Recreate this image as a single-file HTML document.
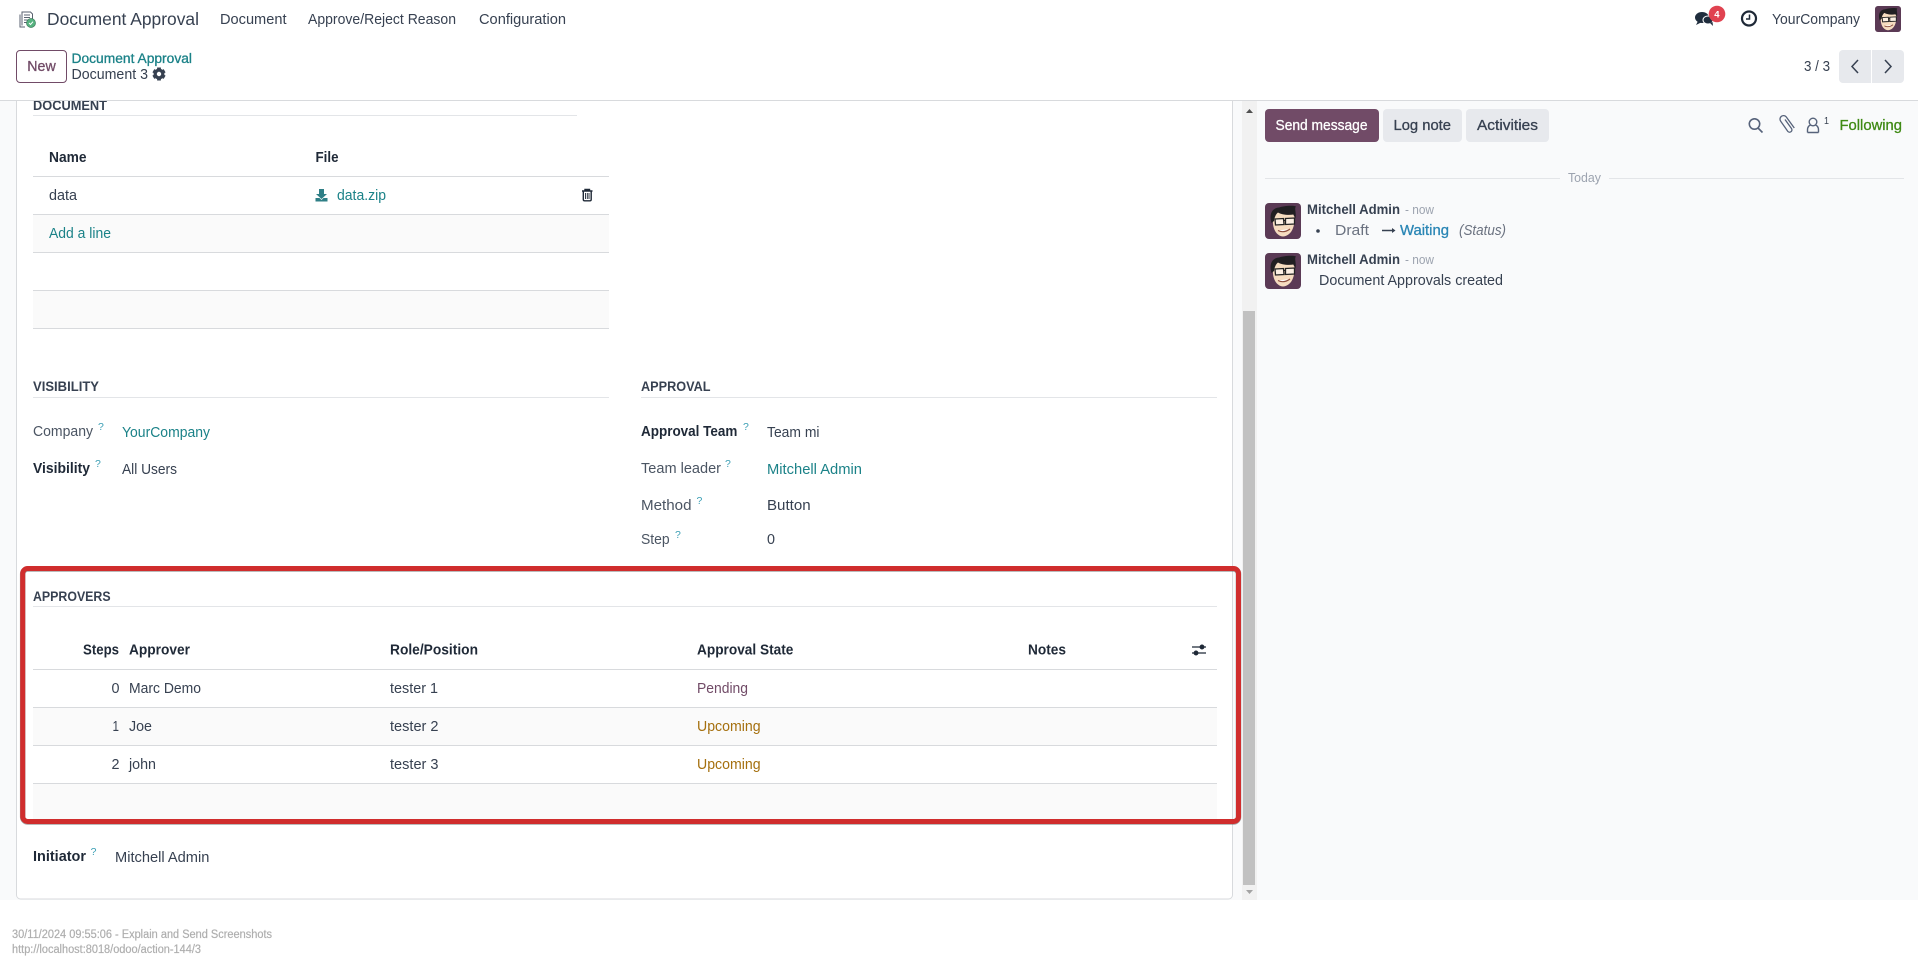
<!DOCTYPE html>
<html lang="en"><head><meta charset="utf-8"><title>Document Approval</title>
<style>
html,body{margin:0;padding:0;background:#fff;width:1918px;height:967px;overflow:hidden}
svg{display:block}
text{font-family:"Liberation Sans",Arial,sans-serif;font-size:14.5px;fill:#374151;white-space:pre}
.b{font-weight:700}
.h{font-weight:700;fill:#1f2937}
.sec{font-weight:700;font-size:13.5px;fill:#374151}
.lbl{fill:#4b5563}
.t{fill:#1b8288}
.q{font-size:10.5px;fill:#3b9fb5}
.g{fill:#9ca3af}
</style></head><body>
<svg xmlns="http://www.w3.org/2000/svg" width="1918" height="967" viewBox="0 0 1918 967">
<defs>
<symbol id="av" viewBox="0 0 36 36">
<rect width="36" height="36" rx="4" fill="#5b3a55"/>
<path d="M8 15C7 25 11 33 18 33.500C25 33 30 26 29.500 14L27 9H11z" fill="#f6dcc0"/>
<path d="M6.500 20C3.500 10 8 5 14 4.500C19 3 27 2 31 3.500C29 5.500 31.500 9 30.500 15.500L28.500 11.500C23 12.500 16 11.500 13 9.500C11 11 9.500 14 9 18z" fill="#211f22"/>
<path d="M10 16l8.500-.5.500 6-8.500.5zM20.500 15.500l9-.5v6l-9 .5z" fill="#fff" fill-opacity=".55" stroke="#222" stroke-width="1.300"/>
<path d="M19 17.500h1.500" stroke="#222" stroke-width="1.100"/>
<path d="M13 27.500Q19 30.500 25 26" stroke="#8a4b3a" stroke-width="1.200" fill="#fff"/>
</symbol>
</defs>

<!-- backgrounds -->
<rect x="0" y="101" width="1918" height="799" fill="#f9fafb"/>
<rect x="16.500" y="80" width="1216" height="819" rx="4" fill="#fff" stroke="#d8dadd"/>
<rect x="0" y="0" width="1918" height="100" fill="#fff"/>
<rect x="0" y="100" width="1918" height="1" fill="#d8dadd"/>
<!-- scrollbar -->
<rect x="1242" y="101" width="15" height="799" fill="#f1f1f1"/>
<rect x="1243" y="311" width="12" height="574" fill="#c1c1c1"/>
<path d="M1246 113l3.500-4 3.500 4z" fill="#505050"/>
<path d="M1246 890l3.500 4 3.500-4z" fill="#a3a3a3"/>

<!-- navbar logo -->
<g transform="translate(18,11)" fill="none" stroke="#5a6270" stroke-width="1">
<path d="M2 3.500v12.500h5"/>
<path d="M4 14.500V1h8.500l2 2v5"/>
<path d="M6 4h6M6 6.500h6M6 9h3.500M6 11.500h2.500" stroke-width="1"/>
<circle cx="13" cy="12" r="4.500" fill="#56b27f" stroke="#3f7e5e" stroke-width=".7"/>
<path d="M11 12l1.500 1.500 2.500-2.800" stroke="#fff" stroke-width="1"/>
</g>
<text x="47" y="25" style="font-size:17.5px" textLength="152" lengthAdjust="spacingAndGlyphs">Document Approval</text>
<text x="220" y="24" textLength="66.500" lengthAdjust="spacingAndGlyphs">Document</text>
<text x="308" y="24" textLength="148" lengthAdjust="spacingAndGlyphs">Approve/Reject Reason</text>
<text x="479" y="24" textLength="87" lengthAdjust="spacingAndGlyphs">Configuration</text>

<!-- chat icon -->
<ellipse cx="1702" cy="17.500" rx="7" ry="5.500" fill="#1f2d3d"/>
<path d="M1698 21l-2 4 5-2.500z" fill="#1f2d3d"/>
<ellipse cx="1708" cy="20" rx="5" ry="4" fill="#1f2d3d" stroke="#fff"/>
<path d="M1710 23l3 3-.5-4z" fill="#1f2d3d"/>
<circle cx="1717" cy="14" r="8.300" fill="#e04250"/>
<text x="1714.300" y="17.700" style="font-size:9.500px;fill:#fff;font-weight:700">4</text>
<!-- clock -->
<circle cx="1749" cy="18.500" r="7" fill="none" stroke="#1f2937" stroke-width="2.200"/>
<path d="M1749.500 14.500v4.500h-3.500" fill="none" stroke="#1f2937" stroke-width="1.500"/>
<text x="1772" y="24" textLength="88" lengthAdjust="spacingAndGlyphs">YourCompany</text>
<use href="#av" x="1875" y="6" width="26" height="26"/>

<!-- control panel -->
<rect x="16.500" y="50.500" width="50" height="32" rx="3.500" fill="#fff" stroke="#714b67"/>
<text x="27.300" y="71" textLength="28.400" lengthAdjust="spacingAndGlyphs" style="fill:#714b67;stroke:#714b67;stroke-width:.3">New</text>
<text x="71.500" y="63" textLength="120.500" lengthAdjust="spacingAndGlyphs" style="font-size:13.500px;fill:#1b8288;stroke:#1b8288;stroke-width:.3">Document Approval</text>
<text x="71.500" y="79" textLength="76.500" lengthAdjust="spacingAndGlyphs">Document 3</text>
<g transform="translate(159,74)" fill="#374151">
<circle r="3.800" fill="none" stroke="#374151" stroke-width="3.200"/>
<g id="tt"><path d="M-1.900-6.500h3.800v3h-3.800zM-1.900 3.500h3.800v3h-3.800z"/></g>
<path d="M-1.900-6.500h3.800v3h-3.800zM-1.900 3.500h3.800v3h-3.800z" transform="rotate(60)"/>
<path d="M-1.900-6.500h3.800v3h-3.800zM-1.900 3.500h3.800v3h-3.800z" transform="rotate(-60)"/>
</g>
<text x="1804" y="71" textLength="26" lengthAdjust="spacingAndGlyphs">3 / 3</text>
<path d="M1843 50h28v33h-28a4 4 0 0 1-4-4v-25a4 4 0 0 1 4-4z" fill="#e7e9ed"/>
<path d="M1872 50h28a4 4 0 0 1 4 4v25a4 4 0 0 1-4 4h-28z" fill="#e7e9ed"/>
<path d="M1858 60l-6 6.500 6 6.500" fill="none" stroke="#374151" stroke-width="1.500"/>
<path d="M1885 60l6 6.500-6 6.500" fill="none" stroke="#374151" stroke-width="1.500"/>

<!-- document section -->
<defs><clipPath id="cl"><rect x="0" y="101" width="1242" height="40"/></clipPath></defs>
<text x="33" y="110" class="sec" textLength="74" lengthAdjust="spacingAndGlyphs" clip-path="url(#cl)">DOCUMENT</text>
<rect x="33" y="115" width="544" height="1" fill="#e3e5e8"/>
<text x="49" y="162" class="h" textLength="37.500" lengthAdjust="spacingAndGlyphs">Name</text>
<text x="315.500" y="162" class="h" textLength="23" lengthAdjust="spacingAndGlyphs">File</text>
<rect x="33" y="176" width="576" height="1" fill="#d8dadd"/>
<text x="49" y="200" textLength="28" lengthAdjust="spacingAndGlyphs">data</text>
<g fill="#2f7f86">
<path d="M319 189h5v5h3l-5.500 5-5.500-5h3z"/>
<path d="M315.500 198h4l2 2 2-2h4v3.500h-12z"/>
</g>
<text x="337" y="200" class="t" textLength="49" lengthAdjust="spacingAndGlyphs">data.zip</text>
<g fill="none" stroke="#1f2937" stroke-width="1.400">
<path d="M582 191h10.500M585 191v-1.500h4.500v1.500"/>
<path d="M583.300 191.500v8q0 1.300 1.300 1.300h5.300q1.300 0 1.300-1.300v-8"/>
<path d="M585.500 193v6M587.300 193v6M589 193v6" stroke-width=".9"/>
</g>
<rect x="33" y="214" width="576" height="1" fill="#d8dadd"/>
<rect x="33" y="215" width="576" height="37" fill="#fafafa"/>
<text x="49" y="238" class="t" textLength="62" lengthAdjust="spacingAndGlyphs">Add a line</text>
<rect x="33" y="252" width="576" height="1" fill="#d8dadd"/>
<rect x="33" y="290" width="576" height="1" fill="#d8dadd"/>
<rect x="33" y="291" width="576" height="37" fill="#fafafa"/>
<rect x="33" y="328" width="576" height="1" fill="#d8dadd"/>

<!-- visibility -->
<text x="33" y="391" class="sec" textLength="66" lengthAdjust="spacingAndGlyphs">VISIBILITY</text>
<rect x="33" y="397" width="576" height="1" fill="#e3e5e8"/>
<text x="33" y="436" class="lbl" textLength="60" lengthAdjust="spacingAndGlyphs">Company</text>
<text x="98" y="430" class="q">?</text>
<text x="122" y="437" class="t" textLength="88" lengthAdjust="spacingAndGlyphs">YourCompany</text>
<text x="33" y="473" class="h" textLength="57" lengthAdjust="spacingAndGlyphs">Visibility</text>
<text x="95" y="467" class="q">?</text>
<text x="122" y="474" textLength="55" lengthAdjust="spacingAndGlyphs">All Users</text>

<!-- approval -->
<text x="641" y="391" class="sec" textLength="69.500" lengthAdjust="spacingAndGlyphs">APPROVAL</text>
<rect x="641" y="397" width="576" height="1" fill="#e3e5e8"/>
<text x="641" y="436" class="h" textLength="96.400" lengthAdjust="spacingAndGlyphs">Approval Team</text>
<text x="743" y="430" class="q">?</text>
<text x="767" y="437" textLength="52.500" lengthAdjust="spacingAndGlyphs">Team mi</text>
<text x="641" y="473" class="lbl" textLength="80" lengthAdjust="spacingAndGlyphs">Team leader</text>
<text x="725" y="467" class="q">?</text>
<text x="767" y="474" class="t" textLength="95" lengthAdjust="spacingAndGlyphs">Mitchell Admin</text>
<text x="641" y="510" class="lbl" textLength="50.500" lengthAdjust="spacingAndGlyphs">Method</text>
<text x="696.500" y="504" class="q">?</text>
<text x="767" y="510" textLength="43.600" lengthAdjust="spacingAndGlyphs">Button</text>
<text x="641" y="544" class="lbl" textLength="28.700" lengthAdjust="spacingAndGlyphs">Step</text>
<text x="675" y="538" class="q">?</text>
<text x="767" y="544" textLength="8" lengthAdjust="spacingAndGlyphs">0</text>

<!-- approvers -->
<text x="33" y="601" class="sec" textLength="77.600" lengthAdjust="spacingAndGlyphs">APPROVERS</text>
<rect x="33" y="606" width="1184" height="1" fill="#e3e5e8"/>
<text x="83" y="654.500" class="h" textLength="36" lengthAdjust="spacingAndGlyphs">Steps</text>
<text x="129" y="654.500" class="h" textLength="61" lengthAdjust="spacingAndGlyphs">Approver</text>
<text x="390" y="654.500" class="h" textLength="88" lengthAdjust="spacingAndGlyphs">Role/Position</text>
<text x="697" y="654.500" class="h" textLength="96.400" lengthAdjust="spacingAndGlyphs">Approval State</text>
<text x="1028" y="654.500" class="h" textLength="38" lengthAdjust="spacingAndGlyphs">Notes</text>
<g stroke="#1f2937" stroke-width="1.300" fill="#1f2937">
<path d="M1192 647h14M1192 653h14" fill="none"/>
<circle cx="1202" cy="647" r="1.800"/>
<circle cx="1196" cy="653" r="1.800"/>
</g>
<rect x="33" y="669" width="1184" height="1" fill="#d8dadd"/>
<text x="111.500" y="693" textLength="8" lengthAdjust="spacingAndGlyphs">0</text>
<text x="129" y="693" textLength="72" lengthAdjust="spacingAndGlyphs">Marc Demo</text>
<text x="390" y="693" textLength="48" lengthAdjust="spacingAndGlyphs">tester 1</text>
<text x="697" y="693" textLength="51" lengthAdjust="spacingAndGlyphs" style="fill:#714b67">Pending</text>
<rect x="33" y="707" width="1184" height="1" fill="#d8dadd"/>
<rect x="33" y="708" width="1184" height="37" fill="#fafafa"/>
<text x="112.500" y="731" textLength="6.500" lengthAdjust="spacingAndGlyphs">1</text>
<text x="129" y="731" textLength="23" lengthAdjust="spacingAndGlyphs">Joe</text>
<text x="390" y="731" textLength="48.500" lengthAdjust="spacingAndGlyphs">tester 2</text>
<text x="697" y="731" textLength="63.600" lengthAdjust="spacingAndGlyphs" style="fill:#a5700f">Upcoming</text>
<rect x="33" y="745" width="1184" height="1" fill="#d8dadd"/>
<text x="111.500" y="769" textLength="8" lengthAdjust="spacingAndGlyphs">2</text>
<text x="129" y="769" textLength="27" lengthAdjust="spacingAndGlyphs">john</text>
<text x="390" y="769" textLength="48.500" lengthAdjust="spacingAndGlyphs">tester 3</text>
<text x="697" y="769" textLength="63.600" lengthAdjust="spacingAndGlyphs" style="fill:#a5700f">Upcoming</text>
<rect x="33" y="783" width="1184" height="1" fill="#d8dadd"/>
<rect x="33" y="784" width="1184" height="36" fill="#fafafa"/>

<!-- red highlight -->
<rect x="22.700" y="569" width="1215.800" height="253" rx="5" fill="none" stroke="#5a5a5a" stroke-opacity=".55" stroke-width="5.600"/>
<rect x="22.700" y="568.500" width="1215.800" height="253" rx="5" fill="none" stroke="#d02d2d" stroke-width="5"/>

<text x="33" y="861" class="h" textLength="53" lengthAdjust="spacingAndGlyphs">Initiator</text>
<text x="90.600" y="855" class="q">?</text>
<text x="115" y="862" textLength="94.400" lengthAdjust="spacingAndGlyphs">Mitchell Admin</text>

<!-- chatter -->
<rect x="1265" y="109" width="114" height="33" rx="4" fill="#714b67"/>
<text x="1275.500" y="130" textLength="92" lengthAdjust="spacingAndGlyphs" style="fill:#fff;stroke:#fff;stroke-width:.3">Send message</text>
<rect x="1383" y="109" width="79" height="33" rx="4" fill="#e7e9ed"/>
<text x="1393.500" y="130" textLength="57.500" lengthAdjust="spacingAndGlyphs" style="stroke:#374151;stroke-width:.3">Log note</text>
<rect x="1466" y="109" width="83" height="33" rx="4" fill="#e7e9ed"/>
<text x="1477" y="130" textLength="61" lengthAdjust="spacingAndGlyphs" style="stroke:#374151;stroke-width:.3">Activities</text>
<g fill="none" stroke="#56627a" stroke-width="1.600">
<circle cx="1754.500" cy="124" r="5.200"/>
<path d="M1758 128l4.500 4.500"/>
<path d="M1785 119.500l6.500 9a2.300 2.300 0 0 1-3.800 2.700l-7-10a3.500 3.500 0 0 1 5.600-4.200l8 11" stroke-width="1.300"/>
<circle cx="1813" cy="122" r="3.800" stroke-width="1.400"/>
<path d="M1807.500 132.500v-2.500q0-3.800 3-5M1818.500 132.500v-2.500q0-3.800-3-5M1807.500 132.500h11" stroke-width="1.400"/>
</g>
<text x="1824" y="124" style="font-size:10.500px" textLength="5" lengthAdjust="spacingAndGlyphs">1</text>
<text x="1839.500" y="130" textLength="62.500" lengthAdjust="spacingAndGlyphs" style="fill:#3f8a14;stroke:#3f8a14;stroke-width:.3">Following</text>

<rect x="1265" y="178" width="295" height="1" fill="#e3e5e8"/>
<rect x="1609" y="178" width="295" height="1" fill="#e3e5e8"/>
<text x="1568" y="182" class="g" style="font-size:13px" textLength="33" lengthAdjust="spacingAndGlyphs">Today</text>

<use href="#av" x="1265" y="203" width="36" height="36"/>
<text x="1307" y="214" textLength="93" lengthAdjust="spacingAndGlyphs" style="font-size:13.500px;font-weight:700">Mitchell Admin</text>
<text x="1405" y="214" textLength="29" lengthAdjust="spacingAndGlyphs" class="g" style="font-size:12.500px">- now</text>
<circle cx="1318" cy="231" r="1.800" fill="#374151"/>
<text x="1335" y="235" textLength="34" lengthAdjust="spacingAndGlyphs" style="fill:#6b7280">Draft</text>
<path d="M1382 230.500h11" stroke="#374151" stroke-width="1.500"/>
<path d="M1392 228l3.500 2.500-3.500 2.500z" fill="#374151"/>
<text x="1400" y="235" textLength="49" lengthAdjust="spacingAndGlyphs" style="fill:#2a86b5;stroke:#2a86b5;stroke-width:.3">Waiting</text>
<text x="1459" y="235" textLength="47" lengthAdjust="spacingAndGlyphs" style="fill:#6b7280;font-style:italic">(Status)</text>

<use href="#av" x="1265" y="253" width="36" height="36"/>
<text x="1307" y="264" textLength="93" lengthAdjust="spacingAndGlyphs" style="font-size:13.500px;font-weight:700">Mitchell Admin</text>
<text x="1405" y="264" textLength="29" lengthAdjust="spacingAndGlyphs" class="g" style="font-size:12.500px">- now</text>
<text x="1319" y="285" textLength="184" lengthAdjust="spacingAndGlyphs">Document Approvals created</text>

<!-- footer -->
<text x="12" y="938" textLength="260" lengthAdjust="spacingAndGlyphs" style="font-size:11.500px;fill:#aaa;stroke:#bbb;stroke-width:.25">30/11/2024 09:55:06 - Explain and Send Screenshots</text>
<text x="12" y="953" textLength="189" lengthAdjust="spacingAndGlyphs" style="font-size:11.500px;fill:#aaa;stroke:#bbb;stroke-width:.25">http://localhost:8018/odoo/action-144/3</text>
</svg>
</body></html>
